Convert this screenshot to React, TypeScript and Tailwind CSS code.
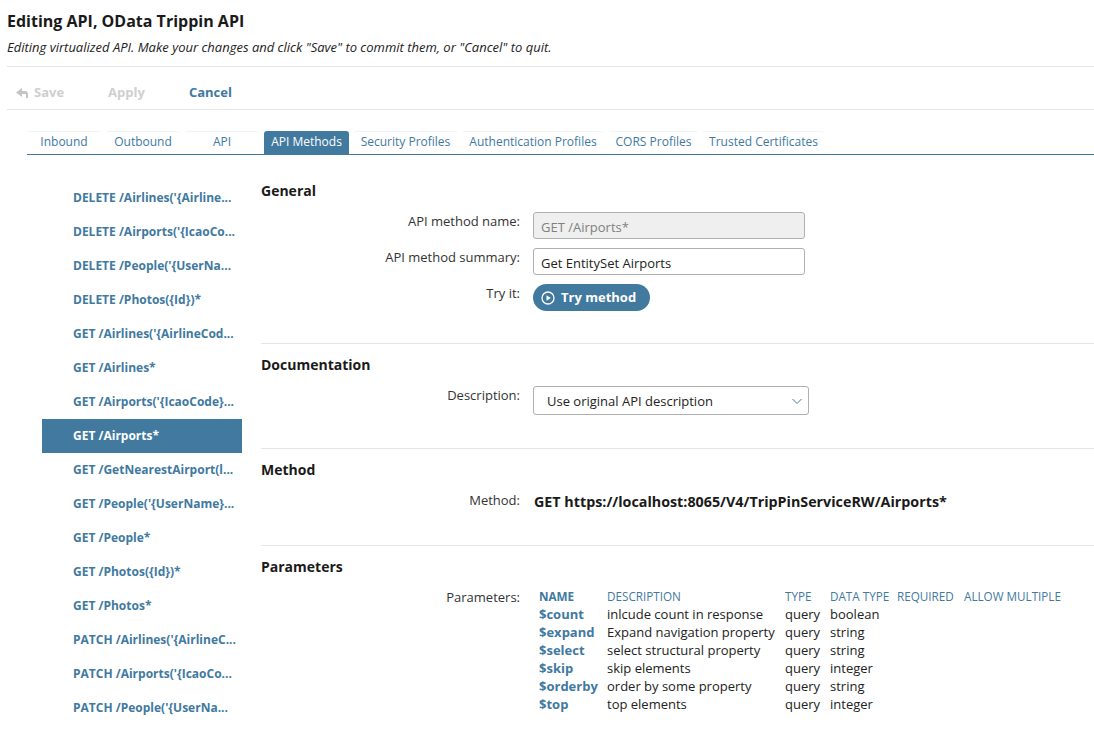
import { ReactNode } from 'react';

const tabs = [
  { label: 'Inbound', w: 'w-[74px]' },
  { label: 'Outbound', w: 'w-[74px]' },
  { label: 'API', w: 'w-[74px]' },
  { label: 'API Methods', w: 'w-[85px]', active: true },
  { label: 'Security Profiles', w: 'w-[103px]' },
  { label: 'Authentication Profiles', w: 'w-[142px]' },
  { label: 'CORS Profiles', w: 'w-[89px]' },
  { label: 'Trusted Certificates', w: 'w-[121px]' },
];

const methods = [
  "DELETE /Airlines('{Airline...",
  "DELETE /Airports('{IcaoCo...",
  "DELETE /People('{UserNa...",
  'DELETE /Photos({Id})*',
  "GET /Airlines('{AirlineCod...",
  'GET /Airlines*',
  "GET /Airports('{IcaoCode}...",
  'GET /Airports*',
  'GET /GetNearestAirport(l...',
  "GET /People('{UserName}...",
  'GET /People*',
  'GET /Photos({Id})*',
  'GET /Photos*',
  "PATCH /Airlines('{AirlineC...",
  "PATCH /Airports('{IcaoCo...",
  "PATCH /People('{UserNa...",
];

const params = [
  ['$count', 'inlcude count in response', 'query', 'boolean'],
  ['$expand', 'Expand navigation property', 'query', 'string'],
  ['$select', 'select structural property', 'query', 'string'],
  ['$skip', 'skip elements', 'query', 'integer'],
  ['$orderby', 'order by some property', 'query', 'string'],
  ['$top', 'top elements', 'query', 'integer'],
];

function Row({ label, children, className }: { label: string; children: ReactNode; className?: string }) {
  return (
    <div className={`flex ${className ?? ''}`}>
      <div className="w-[259px] shrink-0 text-right leading-[18px] text-[#333]">{label}</div>
      <div className="ml-[13px]">{children}</div>
    </div>
  );
}

export default function App() {
  return (
    <div className="w-[1094px] h-[730px] overflow-hidden bg-white text-[13px] text-[#222] font-['Open_Sans',sans-serif]">
      <div className="pl-[7px]">
        <h1 className="pt-[10px] text-[16px] leading-[22px] font-bold text-[#1a1a1a]">Editing API, OData Trippin API</h1>
        <p className="mt-[5px] text-[13px] leading-[20px] italic text-[#222]">
          Editing virtualized API. Make your changes and click "Save" to commit them, or "Cancel" to quit.
        </p>

        <div className="mt-[9px] h-[44px] pt-[10px] flex items-center border-y border-[#e6e6e6] font-bold text-[13px]">
          <span className="ml-[9px] text-[#cfcfcf] flex items-center">
            <svg width="12" height="10" viewBox="0 0 12 10" className="mr-[6px]" fill="#c4c4c4">
              <path d="M6 0 0 4.500 6 9V6h3c.6 0 1 .4 1 1v3h2V6c0-1.700-1.300-3-3-3H6z" />
            </svg>
            Save
          </span>
          <span className="ml-[44px] text-[#cfcfcf]">Apply</span>
          <span className="ml-[44px] text-[#41799f]">Cancel</span>
        </div>
      </div>

      <div className="ml-[27px] mt-[21px] h-[24px] flex gap-[5px] border-b border-[#41799f] text-[12px]">
        {tabs.map(t => (
          <div
            key={t.label}
            className={`${t.w} h-[23px] pb-[2px] flex items-center justify-center rounded-t-[3px] whitespace-nowrap ${t.active ? 'bg-[#41799f] text-white' : 'border-t border-[#f3f3f3] text-[#41799f]'}`}
          >
            {t.label}
          </div>
        ))}
      </div>

      <div className="flex mt-[26px]">
        <div className="ml-[42px] w-[200px] shrink-0 text-[12px] font-bold">
          {methods.map(m => (
            <div
              key={m}
              className={`h-[34px] pl-[31px] leading-[34px] whitespace-nowrap ${m === 'GET /Airports*' ? 'bg-[#41799f] text-white' : 'text-[#41799f]'}`}
            >
              {m}
            </div>
          ))}
        </div>

        <div className="ml-[19px] flex-1">
          <section className="h-[163px] border-b border-[#e6e6e6]">
            <h2 className="text-[14px] leading-[20px] font-bold text-[#1a1a1a]">General</h2>
            <Row label="API method name:" className="mt-[11px]">
              <input
                disabled
                value="GET /Airports*"
                readOnly
                className="block w-[272px] h-[27px] px-[7px] pt-[2px] border border-[#b0b0b0] rounded-[3px] bg-[#efefef] text-[13px] text-[#808080]"
              />
            </Row>
            <Row label="API method summary:" className="mt-[9px]">
              <input
                value="Get EntitySet Airports"
                readOnly
                className="block w-[272px] h-[27px] px-[7px] pt-[2px] border border-[#b0b0b0] rounded-[3px] bg-white text-[13px] text-[#222]"
              />
            </Row>
            <Row label="Try it:" className="mt-[9px]">
              <button className="w-[117px] h-[27px] flex items-center rounded-full bg-[#41799f] pl-[8px] text-[13px] font-bold text-white">
                <svg width="14" height="14" viewBox="0 0 14 14" className="mr-[6px]" fill="none">
                  <circle cx="7" cy="7" r="6" stroke="#fff" strokeWidth="1.300" />
                  <path d="M5.500 4.200v5.600L9.800 7z" fill="#fff" />
                </svg>
                Try method
              </button>
            </Row>
          </section>

          <section className="h-[105px] border-b border-[#e6e6e6] pt-[11px]">
            <h2 className="text-[14px] leading-[20px] font-bold text-[#1a1a1a]">Documentation</h2>
            <Row label="Description:" className="mt-[11px]">
              <div className="w-[276px] h-[29px] flex items-center justify-between pl-[13px] pr-[5px] pt-[3px] border border-[#b0b0b0] rounded-[3px] text-[13px] text-[#222]">
                Use original API description
                <svg width="12" height="12" viewBox="0 0 12 12" fill="none" stroke="#41799f" strokeWidth="1" className="-mt-[3px]">
                  <path d="M1.500 4l4.500 4.500L10.500 4" />
                </svg>
              </div>
            </Row>
          </section>

          <section className="h-[97px] border-b border-[#e6e6e6] pt-[11px]">
            <h2 className="text-[14px] leading-[20px] font-bold text-[#1a1a1a]">Method</h2>
            <Row label="Method:" className="mt-[11px]">
              <div className="pt-[2px] pl-[1px] text-[14.3px] leading-[18px] font-bold text-[#1a1a1a]">
                GET https://localhost:8065/V4/TripPinServiceRW/Airports*
              </div>
            </Row>
          </section>

          <section className="pt-[11px]">
            <h2 className="text-[14px] leading-[20px] font-bold text-[#1a1a1a]">Parameters</h2>
            <Row label="Parameters:" className="mt-[11px]">
              <table className="ml-[6px] text-[13px] leading-[18px]">
                <thead>
                  <tr className="text-[11.7px] leading-[17px] text-[#41799f] text-left">
                    <th className="w-[68px] p-0 font-bold">NAME</th>
                    <th className="w-[178px] p-0 font-normal">DESCRIPTION</th>
                    <th className="w-[45px] p-0 font-normal">TYPE</th>
                    <th className="w-[67px] p-0 font-normal">DATA TYPE</th>
                    <th className="w-[67px] p-0 font-normal">REQUIRED</th>
                    <th className="p-0 font-normal whitespace-nowrap">ALLOW MULTIPLE</th>
                  </tr>
                </thead>
                <tbody>
                  {params.map(p => (
                    <tr key={p[0]}>
                      <td className="p-0 font-bold text-[#41799f]">{p[0]}</td>
                      <td className="p-0 whitespace-nowrap">{p[1]}</td>
                      <td className="p-0">{p[2]}</td>
                      <td className="p-0">{p[3]}</td>
                      <td className="p-0"></td>
                      <td className="p-0"></td>
                    </tr>
                  ))}
                </tbody>
              </table>
            </Row>
          </section>
        </div>
      </div>
    </div>
  );
}
